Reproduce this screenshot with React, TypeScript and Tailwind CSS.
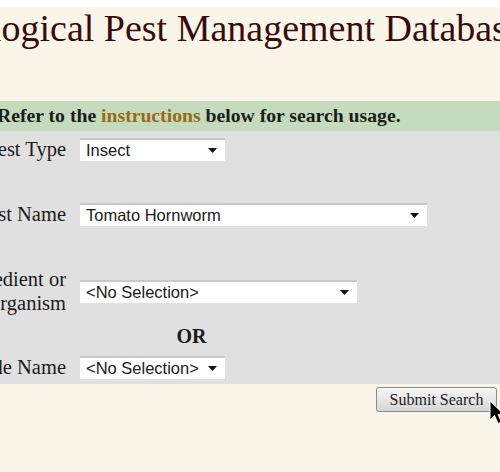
import React from 'react';

const serif = { fontFamily: '"Liberation Serif", "Times New Roman", serif' };

const FakeSelect: React.FC<{ value: string; width: string }> = ({ value, width }) => (
  <div
    className={`${width} h-[23px] bg-white border-t-2 border-[#c9c9c9] flex items-center justify-between pl-[6px] pr-[8px] text-[16.5px] text-[#1a1a1a]`}
    style={{ fontFamily: '"Liberation Sans", Arial, sans-serif' }}
  >
    <span>{value}</span>
    <svg width="9" height="5" viewBox="0 0 9 5">
      <path d="M0 0h9L4.5 5z" fill="#111" />
    </svg>
  </div>
);

const Row: React.FC<{ label: React.ReactNode; children: React.ReactNode; className?: string }> = ({ label, children, className = '' }) => (
  <div className={`flex items-center ${className}`}>
    <div className="w-[116px] text-right whitespace-nowrap leading-[23px]">{label}</div>
    <div className="ml-[14px]">{children}</div>
  </div>
);

const App: React.FC = () => {
  return (
    <div className="relative w-[500px] h-[472px] overflow-hidden bg-[#f9f5e8]" style={serif}>
      <div className="h-[7px] bg-white" />
      <h1 className="ml-[-64px] mt-[1px] whitespace-nowrap text-[38px] leading-[40px] text-[#3a0b0b]">
        Biological Pest Management Database
      </h1>

      <div className="mt-[53px] h-[30px] bg-[#c4dcbd] flex items-center ml-[-15px] pl-[12px] whitespace-nowrap text-[19.7px] font-bold text-[#1b1b1b]">
        Refer to the&nbsp;<span className="text-[#9a6a18]">instructions</span>&nbsp;below for search usage.
      </div>

      <div className="bg-[#e0e0e0] pt-[7px] pb-[5px] text-[20.5px] text-[#1b1b1b]">
        <div className="ml-[-50px]">
          <Row label="Pest Type">
            <FakeSelect value="Insect" width="w-[145px]" />
          </Row>

          <Row label="Pest Name" className="mt-[42px]">
            <FakeSelect value="Tomato Hornworm" width="w-[347px]" />
          </Row>

          <Row
            className="mt-[41px]"
            label={
              <div className="leading-[24px]">
                <div>Ingredient or</div>
                <div>Organism</div>
              </div>
            }
          >
            <FakeSelect value="<No Selection>" width="w-[277px]" />
          </Row>

          <div className="ml-[130px] w-[223px] text-center font-bold text-[20px] leading-[20px] mt-[11px]">OR</div>

          <Row label="Trade Name" className="mt-[10px]">
            <FakeSelect value="<No Selection>" width="w-[145px]" />
          </Row>
        </div>
      </div>

      <div className="flex justify-end pr-[3px] pt-[3px]">
        <button className="h-[25px] w-[121px] rounded-[3px] border border-[#8a8a8a] bg-gradient-to-b from-[#f7f7f7] to-[#d6d6d6] text-[16px] text-[#1b1b1b]">
          Submit Search
        </button>
      </div>

      <svg className="absolute left-[489px] top-[400px]" width="16" height="26" viewBox="0 0 16 26">
        <path d="M1 1 L1 20 L5.5 15.5 L9 23.5 L12.5 22 L9 14.5 L15 14.5 Z" fill="#000" stroke="#fff" strokeWidth="1" />
      </svg>
    </div>
  );
};

export default App;
